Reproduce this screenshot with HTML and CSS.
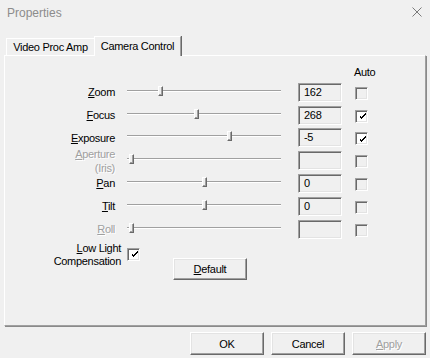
FILE: index.html
```html
<!DOCTYPE html>
<html>
<head>
<meta charset="utf-8">
<title>Properties</title>
<link rel="stylesheet" href="styles.css">
</head>
<body>
<div class="window">
  <div class="titlebar">
    <span class="title">Properties</span>
    <svg class="close" width="10" height="10" viewBox="0 0 10 10"><path d="M0.5 0.5 L9.5 9.5 M9.5 0.5 L0.5 9.5" stroke="#7a7a7a" stroke-width="1" fill="none"/></svg>
  </div>
  <div class="body">
    <div class="tabs">
      <div class="tab">Video Proc Amp</div>
      <div class="tab active">Camera Control</div>
    </div>
    <div class="panel">
      <div class="auto-head"><span class="auto-label">Auto</span></div>

      <div class="row">
        <div class="label"><span><u>Z</u>oom</span></div>
        <div class="slider"><div class="groove"></div><div class="thumb" style="left:31px"></div></div>
        <div class="edit">162</div>
        <div class="check"></div>
      </div>
      <div class="row">
        <div class="label"><span><u>F</u>ocus</span></div>
        <div class="slider"><div class="groove"></div><div class="thumb" style="left:67px"></div></div>
        <div class="edit">268</div>
        <div class="check checked"><svg width="7" height="7" viewBox="0 0 7 7"><path d="M0 2h1v3h1v1h1v-1h1v-1h1v-1h1v-1h1v-2h-1v1h-1v1h-1v1h-1v1h-1v-1h-1v-1z" fill="#000"/></svg></div>
      </div>
      <div class="row">
        <div class="label"><span><u>E</u>xposure</span></div>
        <div class="slider"><div class="groove"></div><div class="thumb" style="left:100px"></div></div>
        <div class="edit">-5</div>
        <div class="check checked"><svg width="7" height="7" viewBox="0 0 7 7"><path d="M0 2h1v3h1v1h1v-1h1v-1h1v-1h1v-1h1v-2h-1v1h-1v1h-1v1h-1v1h-1v-1h-1v-1z" fill="#000"/></svg></div>
      </div>
      <div class="row">
        <div class="label disabled"><span><u>A</u>perture<br>(Iris)</span></div>
        <div class="slider"><div class="groove"></div><div class="thumb" style="left:2px"></div></div>
        <div class="edit"></div>
        <div class="check"></div>
      </div>
      <div class="row">
        <div class="label"><span><u>P</u>an</span></div>
        <div class="slider"><div class="groove"></div><div class="thumb" style="left:75px"></div></div>
        <div class="edit">0</div>
        <div class="check"></div>
      </div>
      <div class="row">
        <div class="label"><span><u>T</u>ilt</span></div>
        <div class="slider"><div class="groove"></div><div class="thumb" style="left:75px"></div></div>
        <div class="edit">0</div>
        <div class="check"></div>
      </div>
      <div class="row">
        <div class="label disabled"><span><u>R</u>oll</span></div>
        <div class="slider"><div class="groove"></div><div class="thumb" style="left:2px"></div></div>
        <div class="edit"></div>
        <div class="check"></div>
      </div>

      <div class="lowlight">
        <div class="ll-label"><u>L</u>ow Light<br>Compensation</div>
        <div class="check checked ll-check"><svg width="7" height="7" viewBox="0 0 7 7"><path d="M0 2h1v3h1v1h1v-1h1v-1h1v-1h1v-1h1v-2h-1v1h-1v1h-1v1h-1v1h-1v-1h-1v-1z" fill="#000"/></svg></div>
        <div class="button default-btn"><u>D</u>efault</div>
      </div>
    </div>
    <div class="footer">
      <div class="button">OK</div>
      <div class="button">Cancel</div>
      <div class="button disabled-btn"><u>A</u>pply</div>
    </div>
  </div>
</div>
</body>
</html>
```
FILE: styles.css
```css
html, body {
  margin: 0;
  padding: 0;
}
body {
  background: #f0f0f0;
  font-family: "Liberation Sans", Arial, sans-serif;
  font-size: 11px;
  letter-spacing: -0.3px;
  color: #000;
  width: 430px;
  height: 358px;
  overflow: hidden;
}
.window {
  width: 430px;
  height: 358px;
}
.titlebar {
  height: 26px;
  display: flex;
  align-items: center;
  justify-content: space-between;
  padding: 0 8px 0 7px;
}
.title {
  font-size: 12px;
  letter-spacing: 0;
  color: #8c8c8c;
}
.close {
  display: block;
  margin-top: -2px;
}
.body {
  padding: 10px 4px 0 4px;
}
.tabs {
  height: 19px;
  display: flex;
  align-items: flex-end;
  padding-left: 2px;
  position: relative;
  z-index: 1;
}
.tab {
  box-sizing: border-box;
  width: 88px;
  height: 17px;
  border-top: 1px solid #fff;
  border-left: 1px solid #fff;
  display: flex;
  align-items: center;
  justify-content: center;
  background: #f0f0f0;
}
.tab.active {
  width: 87px;
  height: 20px;
  margin-bottom: -1px;
  padding-bottom: 2px;
  border-right: 1px solid #a0a0a0;
  box-shadow: 1px 0 0 #696969;
}
.panel {
  box-sizing: border-box;
  height: 271px;
  border-top: 1px solid #fff;
  border-left: 1px solid #fff;
  border-right: 1px solid #a0a0a0;
  border-bottom: 1px solid #a0a0a0;
  box-shadow: 1px 1px 0 #8a8a8a;
  padding-top: 9px;
}
.auto-head {
  height: 14px;
  display: flex;
  align-items: center;
}
.auto-label {
  margin-left: 349px;
}
.row {
  display: flex;
  height: 19px;
  margin-top: 3.8px;
}
.label {
  width: 110px;
  height: 19px;
  display: flex;
  align-items: center;
  justify-content: flex-end;
  text-align: right;
  line-height: 14px;
}
.disabled {
  color: #a0a0a0;
  text-shadow: 1px 1px 0 #fff;
}
.slider {
  position: relative;
  width: 154px;
  height: 19px;
  margin-left: 12px;
}
.groove {
  position: absolute;
  left: 0;
  right: 0;
  top: 7px;
  height: 0;
  border-top: 1px solid #a0a0a0;
  border-bottom: 1px solid #fff;
}
.thumb {
  position: absolute;
  top: 3px;
  box-sizing: border-box;
  width: 5px;
  height: 10px;
  background: #f0f0f0;
  border-top: 1px solid #fff;
  border-left: 1px solid #fff;
  border-right: 1px solid #696969;
  border-bottom: 1px solid #696969;
  box-shadow: inset -1px -1px 0 #a0a0a0;
}
.edit {
  box-sizing: border-box;
  width: 44px;
  height: 19px;
  margin-left: 17px;
  border-top: 1px solid #a0a0a0;
  border-left: 1px solid #a0a0a0;
  border-right: 1px solid #fff;
  border-bottom: 1px solid #fff;
  box-shadow: inset 1px 1px 0 #696969, inset -1px -1px 0 #e3e3e3;
  padding-left: 5px;
  line-height: 17px;
}
.check {
  box-sizing: border-box;
  width: 13px;
  height: 13px;
  margin-left: 13px;
  margin-top: 4px;
  border-top: 1px solid #a0a0a0;
  border-left: 1px solid #a0a0a0;
  border-right: 1px solid #fff;
  border-bottom: 1px solid #fff;
  box-shadow: inset 1px 1px 0 #696969, inset -1px -1px 0 #e3e3e3;
  background: #f0f0f0;
  display: flex;
  align-items: center;
  justify-content: center;
}
.check.checked {
  background: #fff;
}
.check svg {
  display: block;
  margin: 1px 0 0 1px;
}
.lowlight {
  display: flex;
  align-items: flex-start;
  margin-top: 3px;
}
.ll-label {
  width: 116px;
  text-align: right;
  line-height: 13px;
}
.ll-check {
  margin-left: 6px;
  margin-top: 6px;
}
.button {
  box-sizing: border-box;
  width: 74px;
  height: 23px;
  border-top: 1px solid #fff;
  border-left: 1px solid #fff;
  border-right: 1px solid #696969;
  border-bottom: 1px solid #696969;
  box-shadow: inset -1px -1px 0 #a0a0a0, inset 1px 1px 0 #e3e3e3;
  background: #f0f0f0;
  display: flex;
  align-items: center;
  justify-content: center;
}
.default-btn {
  height: 22px;
  margin-left: 33px;
  margin-top: 16px;
}
.footer {
  display: flex;
  justify-content: flex-end;
  gap: 7px;
  margin-top: 6px;
}
.disabled-btn {
  color: #a0a0a0;
  text-shadow: 1px 1px 0 #fff;
}
```
